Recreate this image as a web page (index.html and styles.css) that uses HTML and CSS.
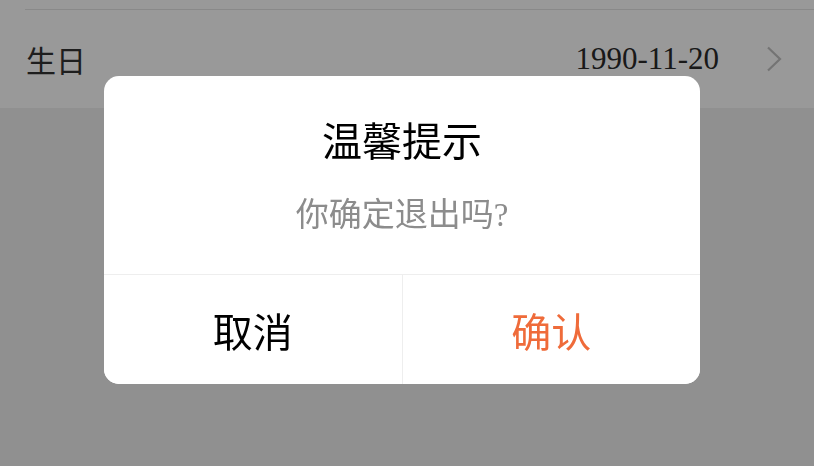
FILE: index.html
```html
<!DOCTYPE html>
<html lang="zh-CN">
<head>
  <meta charset="UTF-8" />
  <meta name="viewport" content="width=device-width, initial-scale=1.0"/>
  <title>个人资料</title>
  <link rel="stylesheet" href="styles.css">
</head>
<body>

  <div class="list">
    <div class="sep"></div>
    <div class="row">
      <span class="label">生日</span>
      <span class="value">1990-11-20</span>
      <svg class="arrow" width="16" height="26" viewBox="0 0 16 26">
        <polyline points="2,1.5 14,13 2,24.5" fill="none" stroke="#c2c2c2" stroke-width="2.2"/>
      </svg>
    </div>
  </div>

  <!-- 退出确认弹窗 -->
  <div class="mask">
    <div class="dialog">
      <div class="dialog-body">
        <div class="dialog-title">温馨提示</div>
        <div class="dialog-msg">你确定退出吗?</div>
      </div>
      <div class="dialog-actions">
        <button class="btn">取消</button>
        <button class="btn btn-ok">确认</button>
      </div>
    </div>
  </div>

</body>
</html>
```

FILE: styles.css
```css
body {
  margin: 0;
  background: #f0f0f0;
  font-family: "Liberation Serif", "Noto Sans CJK SC", serif;
  color: #333;
}

.list {
  background: #fff;
  padding-top: 9px;
}

.sep {
  height: 1px;
  margin-left: 25px;
  background: #e4e4e4;
}

.row {
  display: flex;
  align-items: center;
  height: 98px;
  padding: 0 32px 0 26px;
  font-size: 30px;
}

.label {
  flex: 1;
}

.value {
  font-size: 31px;
  color: #2a2a2a;
}

.arrow {
  margin-left: 47px;
}

.mask {
  position: fixed;
  top: 0; left: 0;
  width: 100%; height: 100%;
  background: rgba(0, 0, 0, 0.4);
  padding: 76px 0 0 104px;
  box-sizing: border-box;
}

.dialog {
  width: 596px;
  background: #fff;
  border-radius: 15px;
  overflow: hidden;
}

.dialog-body {
  padding: 47px 0 42px;
  text-align: center;
}

.dialog-title {
  font-size: 40px;
  line-height: 40px;
  color: #000;
}

.dialog-msg {
  margin-top: 36px;
  font-size: 33px;
  line-height: 33px;
  color: #8c8c8c;
}

.dialog-actions {
  display: flex;
  border-top: 1px solid #eeeeee;
}

.btn {
  flex: 1;
  height: 109px;
  border: none;
  background: #fff;
  font-family: inherit;
  font-size: 40px;
  color: #000;
  padding: 0;
}

.btn + .btn {
  border-left: 1px solid #eeeeee;
}

.btn-ok {
  color: #ef6b3a;
}
```
